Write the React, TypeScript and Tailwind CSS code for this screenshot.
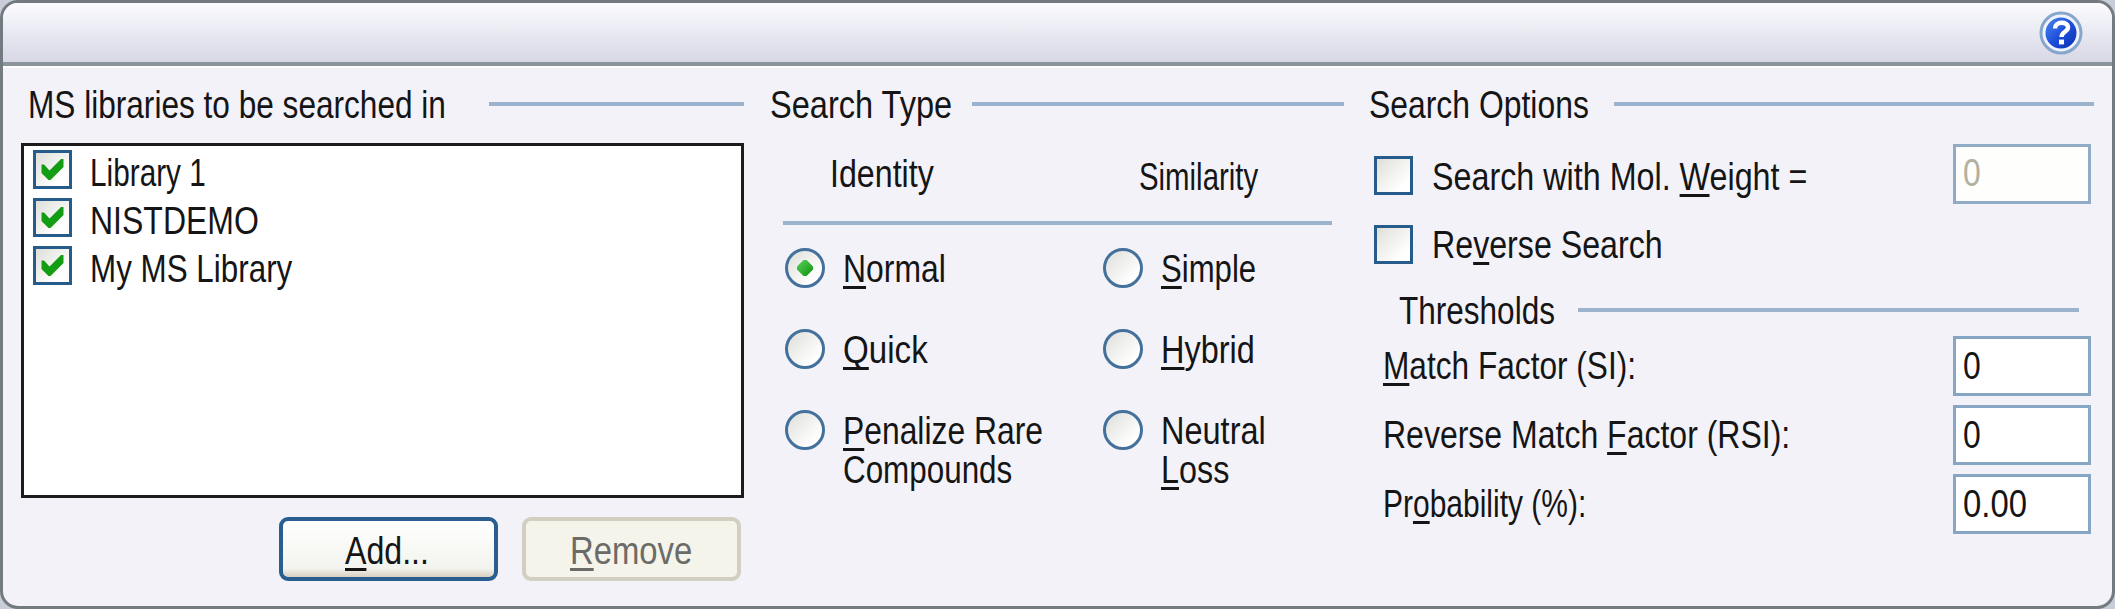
import { useLayoutEffect, useRef, useState, type ReactNode } from "react";

/* One line of dialog text, condensed horizontally to the given width. */
function Fit({ w, children, className = "" }: { w: number; children: ReactNode; className?: string }) {
  const ref = useRef<HTMLSpanElement>(null);
  const [scale, setScale] = useState(1);
  useLayoutEffect(() => {
    if (ref.current) setScale((w - 2) / ref.current.offsetWidth);
  }, [w]);
  return (
    <span className={`block h-10 shrink-0 overflow-visible ${className}`} style={{ width: w }}>
      <span
        ref={ref}
        className="inline-block origin-left text-[39px] leading-10 whitespace-nowrap"
        style={{ transform: `translate(2px, 1px) scaleX(${scale})` }}
      >
        {children}
      </span>
    </span>
  );
}

function U({ children }: { children: ReactNode }) {
  return (
    <span className="underline decoration-[3px] underline-offset-[4px] [text-decoration-skip-ink:none]">
      {children}
    </span>
  );
}

function Rule({ className = "" }: { className?: string }) {
  return <div className={`h-1 bg-[#9cb3cd] ${className}`} />;
}

function Check({ checked = false, className = "" }: { checked?: boolean; className?: string }) {
  return (
    <span
      className={`block size-[39px] shrink-0 border-3 border-[#265c8c] bg-linear-to-br from-[#dfdfd9] to-white to-80% ${className}`}
    >
      {checked && (
        <svg viewBox="0 0 33 33" className="size-full">
          <path d="M5.5 11.5 L8 11.5 L13.5 17.5 L25 6 H27.5 V14 L14.5 27 H12.5 L5.5 20 Z" fill="#149c14" />
        </svg>
      )}
    </span>
  );
}

function Radio({ checked = false }: { checked?: boolean }) {
  return (
    <span className="flex size-10 shrink-0 items-center justify-center rounded-full border-3 border-[#43719c] bg-linear-to-br from-[#dededa] to-white to-80%">
      {checked && (
        <svg viewBox="0 0 16 16" className="size-4">
          <defs>
            <linearGradient id="dot" x1="0" y1="0" x2="1" y2="1">
              <stop offset="0" stopColor="#5ad45a" />
              <stop offset="1" stopColor="#0c8f0c" />
            </linearGradient>
          </defs>
          <path d="M6.5 0 H9.5 L16 6.5 V9.5 L9.5 16 H6.5 L0 9.5 V6.5 Z" fill="url(#dot)" />
        </svg>
      )}
    </span>
  );
}

function Option({ w, checked, children }: { w: number; checked?: boolean; children: ReactNode }) {
  return (
    <div className="flex h-[41px] items-center gap-4">
      <Radio checked={checked} />
      <Fit w={w}>{children}</Fit>
    </div>
  );
}

function Field({ value, w, disabled = false }: { value: string; w: number; disabled?: boolean }) {
  return (
    <div
      className={`flex h-[60px] w-[138px] shrink-0 items-center border-3 pl-[5px] ${
        disabled ? "border-[#8fabc6] bg-[#fefefc] text-[#b3b0a0]" : "border-[#86a6c4] bg-white"
      }`}
    >
      <Fit w={w} className="-mt-[3px]">{value}</Fit>
    </div>
  );
}

function HelpIcon() {
  return (
    <svg viewBox="0 0 46 46" className="size-[46px]">
      <defs>
        <linearGradient id="help" x1="0" y1="0" x2="1" y2="1">
          <stop offset="0" stopColor="#4f86ee" />
          <stop offset="0.5" stopColor="#1f50dc" />
          <stop offset="1" stopColor="#0a2fb0" />
        </linearGradient>
      </defs>
      <circle cx="23" cy="23" r="20" fill="#eef3fc" stroke="#86a6cc" strokeWidth="3" />
      <circle cx="23" cy="23" r="15.5" fill="url(#help)" />
      <path d="M17 18.5 C17 11 30 11 30 17.5 C30 22 23.5 21.5 23.5 27" fill="none" stroke="#fff" strokeWidth="4.4" />
      <rect x="21" y="29.6" width="5" height="4.8" fill="#fff" />
    </svg>
  );
}

const libraries = [
  { name: "Library 1", w: 118 },
  { name: "NISTDEMO", w: 171 },
  { name: "My MS Library", w: 204 },
];

export default function App() {
  return (
    <div className="h-[609px] w-[2115px] bg-[#c9cdd8] font-['Liberation_Sans',sans-serif] text-[#151515]">
      <div className="flex h-full flex-col overflow-hidden rounded-[18px] border-3 border-[#747b80] bg-[#f3f2f8]">
        <header className="flex h-[63px] shrink-0 items-center justify-end border-b-4 border-[#8b9498] bg-linear-to-b from-[#fbfbff] via-[#e9e9f2] to-[#d8d8e6] pr-[28px]">
          <HelpIcon />
        </header>

        <main className="flex grow items-start border-t-2 border-white pt-[15px]">
          <section className="ml-[18px] w-[723px] shrink-0">
            <div className="flex h-[41px] items-center justify-between pl-[5px]">
              <Fit w={420}>MS libraries to be searched in</Fit>
              <Rule className="w-[255px]" />
            </div>
            <ul className="mt-[19px] h-[355px] border-3 border-[#1c1c1c] bg-white pt-[1px] pl-[9px]">
              {libraries.map((lib) => (
                <li key={lib.name} className="flex h-12 items-start gap-[16px] pt-[3px]">
                  <Check checked />
                  <Fit w={lib.w} className="mt-[2px]">{lib.name}</Fit>
                </li>
              ))}
            </ul>
            <div className="mt-[19px] flex justify-end gap-[24px] pr-[3px]">
              <button className="flex h-16 w-[219px] items-center justify-center rounded-[9px] border-4 border-[#285f90] bg-linear-to-b from-white via-[#f3f3ee] via-85% to-[#d8cfc0]">
                <Fit w={86} className="mt-[1px] -ml-[6px]">
                  <U>A</U>dd...
                </Fit>
              </button>
              <button
                disabled
                className="flex h-16 w-[219px] items-center justify-center rounded-[9px] border-4 border-[#d0cfc0] bg-[#f4f4ea] text-[#6b6b68]"
              >
                <Fit w={124} className="mt-[1px] -ml-[4px]">
                  <U>R</U>emove
                </Fit>
              </button>
            </div>
          </section>

          <section className="ml-[24px] w-[576px] shrink-0">
            <div className="flex h-[41px] items-center justify-between">
              <Fit w={184}>Search Type</Fit>
              <Rule className="w-[372px]" />
            </div>
            <div className="mt-[29px] flex items-start">
              <Fit w={106} className="ml-[60px]">Identity</Fit>
              <Fit w={121} className="mt-[3px] ml-[203px]">Similarity</Fit>
            </div>
            <Rule className="mt-[25px] ml-[15px] w-[549px]" />
            <div className="mt-[22px] ml-[17px] grid grid-cols-[318px_1fr] gap-y-[40px]">
              <Option w={105} checked><U>N</U>ormal</Option>
              <Option w={97}><U>S</U>imple</Option>
              <Option w={87}><U>Q</U>uick</Option>
              <Option w={96}><U>H</U>ybrid</Option>
              <div>
                <Option w={202}><U>P</U>enalize Rare</Option>
                <Fit w={171} className="-mt-[1px] ml-14">Compounds</Fit>
              </div>
              <div>
                <Option w={107}>Neutral</Option>
                <Fit w={70} className="-mt-[1px] ml-14"><U>L</U>oss</Fit>
              </div>
            </div>
          </section>

          <section className="ml-[23px] w-[727px] shrink-0">
            <div className="flex h-[41px] items-center justify-between">
              <Fit w={222}>Search Options</Fit>
              <Rule className="w-[480px]" />
            </div>
            <div className="mt-[19px] flex h-[61px] items-center pr-[3px] pl-[7px]">
              <Check className="mt-[3px]" />
              <Fit w={377} className="mt-[4px] ml-[17px]">
                Search with Mol. <U>W</U>eight =
              </Fit>
              <div className="ml-auto">
                <Field value="0" w={20} disabled />
              </div>
            </div>
            <div className="mt-5 flex h-10 items-center pl-[7px]">
              <Check />
              <Fit w={233} className="ml-[17px]">
                Re<U>v</U>erse Search
              </Fit>
            </div>
            <div className="mt-[26px] flex h-10 items-center justify-between pr-[15px] pl-[30px]">
              <Fit w={158}>Thresholds</Fit>
              <Rule className="w-[501px]" />
            </div>
            <div className="mt-[6px] flex flex-col gap-[9px] pr-[3px] pl-[14px]">
              <div className="flex items-center justify-between">
                <Fit w={255} className="-mt-[3px]"><U>M</U>atch Factor (SI):</Fit>
                <Field value="0" w={20} />
              </div>
              <div className="flex items-center justify-between">
                <Fit w={409} className="-mt-[3px]">Reverse Match <U>F</U>actor (RSI):</Fit>
                <Field value="0" w={20} />
              </div>
              <div className="flex items-center justify-between">
                <Fit w={205} className="-mt-[3px]">Pr<U>o</U>bability (%):</Fit>
                <Field value="0.00" w={66} />
              </div>
            </div>
          </section>
        </main>
      </div>
    </div>
  );
}
